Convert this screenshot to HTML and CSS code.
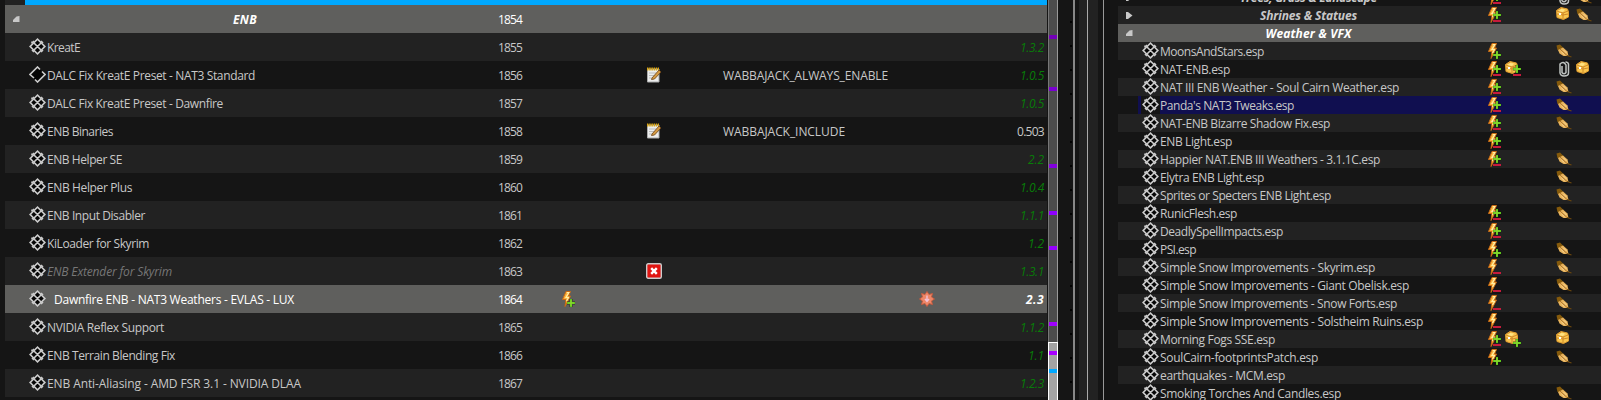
FILE: index.html
```html
<!DOCTYPE html>
<html lang="en">
<head>
<meta charset="utf-8">
<title>Mod list</title>
<link rel="stylesheet" href="styles.css">
</head>
<body>
<svg class="defs" aria-hidden="true">
  <symbol id="check" viewBox="0 0 17 17"><rect x="3.3" y="3.3" width="10.4" height="10.4" transform="rotate(45 8.5 8.5)" fill="#050505" stroke="#ccc" stroke-width="1.6"/><path d="M5 5l7 7M12 5l-7 7M3 5.500V3.500M5 3l-2 2M12 3l2 2M3 12l2 2M14 12l-2 2" stroke="#ccc" stroke-width="1.6" fill="none"/></symbol>
  <symbol id="uncheck" viewBox="0 0 17 17"><rect x="3" y="3" width="11" height="11" transform="rotate(45 8.5 8.5)" fill="#050505"/><path d="M5 12L1 8.500L8.500 1L11 3.500M13 5.500L16 8.500L8.500 16L6 13.500" stroke="#ccc" stroke-width="1.6" fill="none"/></symbol>
  <symbol id="bolt" viewBox="0 0 16 16"><path d="M5 .5h4.500L7.500 5H9.500L4 15.500L5 8.500H1.500z" fill="#fbb33c" stroke="#c96a14" stroke-width="1"/><path d="M5.800 1.500h2L5 6.500H7.500L5.500 10" stroke="#fff0a8" stroke-width="1.200" fill="none"/></symbol>
  <symbol id="plus" viewBox="0 0 10 10"><path d="M5 1v8M1 5h8" stroke="#102000" stroke-width="4" opacity=".35"/><path d="M5 1v8M1 5h8" stroke="#5cc41a" stroke-width="2"/><path d="M5 2v6M2 5h6" stroke="#a0e03a" stroke-width=".8"/></symbol>
  <symbol id="chest" viewBox="0 0 13 13"><path d="M.5 3.500L5 .5L11.500 2L12.500 5V10L7.500 12.500L1 10.500z" fill="#f9c64e" stroke="#e09c30"/><path d="M1 4L7 6L12 4M7 6V12M1 7L7 8L12 7M5 1L3 4" stroke="#c77a20" fill="none" stroke-width=".8"/><path d="M2 4L5 2L9 2.500L7 5z" fill="#ffe484"/><rect x="3" y="6" width="2" height="2" fill="#fff"/></symbol>
  <symbol id="feather" viewBox="0 0 16 14"><path d="M.5 1.500L4 .5L7.500 4L6 7L1.500 6z" fill="#855a0c"/><path d="M2 6L7 3.500L11.500 7.500L12.500 12L7.500 12L3.500 9.500z" fill="#e8b35c"/><path d="M4 5L11 11.500" stroke="#9b6420" stroke-width=".8"/><path d="M5.500 8L8.500 10.800M7.500 6L10.500 9" stroke="#ffe0a0" stroke-width=".8"/><path d="M11 11.500L15.500 13" stroke="#6c470d" stroke-width="1.200"/></symbol>
  <symbol id="clip" viewBox="0 0 12 16"><path d="M4 5V11.500Q6 14 8 11.500V4Q5.500-.5 2 3V12Q2.500 15 6 15Q10.500 15 10.500 12V3Q10 1 7.500 1" fill="none" stroke="#bfc3c1" stroke-width="1.500"/></symbol>
  <symbol id="note" viewBox="0 0 16 16"><path d="M1.500 2h11.500v13H1.500z" fill="#eceded" stroke="#aaa"/><path d="M1 2h12" stroke="#d9a512" stroke-width="3" stroke-dasharray="1.500 .7"/><path d="M3 6h7M3 8.500h6M3 11h4" stroke="#bbb"/><path d="M6 11L13 3L15 5L8.500 12L5.500 12.500z" fill="#d59a42" stroke="#694116" stroke-width=".8"/></symbol>
  <symbol id="cross" viewBox="0 0 16 16"><rect x=".7" y=".7" width="14.600" height="14.600" rx="1.500" fill="#e01512" stroke="#ccc" stroke-width="1.400"/><path d="M5.200 5.200l5.600 5.600M10.800 5.200l-5.600 5.600" stroke="#fff" stroke-width="2.400"/></symbol>
  <symbol id="burst" viewBox="0 0 16 16"><path d="M8 .5L10 3.500L13.500 2.500L12.500 6L15.500 8L12.500 10L13.500 13.500L10 12.500L8 15.500L6 12.500L2.500 13.500L3.500 10L.5 8L3.500 6L2.500 2.500L6 3.500z" fill="#ec8768" stroke="#c8583b" stroke-width=".9"/><path d="M8 4.500v6M6 8L8 10.500l2-2.500" stroke="#f1c1d8" stroke-width="1.400" fill="none"/></symbol>
  <symbol id="open" viewBox="0 0 7 7"><path d="M6.500 0V6H0V4L3.500.5z" fill="#c8c8c8"/></symbol>
  <symbol id="closed" viewBox="0 0 7 7"><path d="M0 0H2L6.500 3.500L2 7H0z" fill="#c8c8c8"/></symbol>
</svg>
<main class="window">
  <section class="mods"><div class="progress"></div><div id="mods"></div></section>
  <aside class="scrollbar" id="marks"><i class="thumb"></i></aside>
  <div class="gutter"><i class="dots"></i><i class="line line-a"></i><i class="strip"></i><i class="line"></i><i class="strip strip-b"></i><i class="gap"></i><i class="line line-c"></i></div>
  <section class="plugins" id="plugins"></section>
</main>
<script src="app.js"></script>
</body>
</html>
```
FILE: styles.css
```css
* { box-sizing: border-box; }
body { margin: 0; background: #151515; font: 12px/18px "Open Sans", "Noto Sans", sans-serif; color: #c8c8c8; overflow: hidden; }
.defs { position: absolute; width: 0; height: 0; }
svg { display: block; flex: none; }
.window { display: flex; height: 400px; width: 1601px; overflow: hidden; }
.mods { width: 1042px; margin-left: 5px; flex: none; }
.progress { height: 5px; background: #00a8ff; border-left: 20px solid #222; }
.mod { display: grid; grid-template-columns: 20px 473px 63px 85px 77px 196px 45px 83px; height: 28px; align-items: center; background: #151515; white-space: nowrap; }
.mod.alt, .plugin.alt { background: #222; }
.mod.sel, .plugin.sel { background: #5f5f5d; color: #fff; }
.name { display: flex; align-items: center; }
.name svg { margin: -2px 1px 0 4px; }
.text { padding-top: 2px; }
.separator .name { padding-left: 208px; }
.title { font-weight: 700; font-style: italic; }
.indent { padding-left: 7px; }
.disabled { font-style: italic; color: #777; }
.version { text-align: right; padding-right: 3px; }
.version.ok { color: #087c08; font-style: italic; }
.sel .version { font-weight: 700; font-style: italic; }
.arrow { margin-left: 8px; }
.scrollbar { position: relative; width: 8px; margin-left: 2px; background: #4c4c4c; flex: none; box-shadow: -1px 0 #777, 1px 0 #999; }
.mark { position: absolute; left: 0; width: 8px; height: 4px; }
.thumb { position: absolute; left: -1px; top: 342px; width: 10px; height: 60px; background: #a3a3a3; border: 1px solid #fff; }
.gutter { display: flex; width: 61px; flex: none; }
.gutter i { flex: none; }
.dots { width: 16px; background: radial-gradient(circle at 14px 22px, #000 1px, transparent 1.500px) 0 0 / 16px 24px; }
.line { width: 1px; background: #aaa; }
.line-a { width: 2px; background: #888; }
.strip { width: 12px; border-left: 4px solid #151515; background: #222; }
.strip-b { width: 10px; border: 0; }
.gap { width: 5px; }
.line-c { background: #999; }
.plugins { width: 483px; flex: none; margin-top: -12px; }
.plugin { display: grid; grid-template-columns: 23px 346px 18px 51px 20px 25px; height: 18px; align-items: center; background: #151515; white-space: nowrap; }
.plugin .name { height: 18px; }
.plugin .name svg { margin: -1px 1px 0 1px; }
.plugin .title { flex: 1; text-align: center; padding-right: 11px; }
.plugin.hover { background: linear-gradient(90deg, #151515 20px, #100f50 20px, #100f50 23px, #151515 23px, #151515 42px, #100f50 42px); }
.flag-chest { align-self: start; margin-top: 1px; }
.flag-clip { margin-left: 2px; }
.sign { position: relative; width: 16px; height: 16px; }
.sign .plus { position: absolute; left: 5px; top: 7px; }
.sign.both .plus { top: 3px; }
.sign .minus { position: absolute; left: 6px; top: 13px; width: 8px; height: 2px; background: #c61b3c; }
.sign.chested .plus { left: 7px; top: 7px; }
.sign.chested.both .plus { top: 3px; }
.sign.chested .minus { left: 8px; }
```
FILE: app.js
```js
const icon = (id, w, h, cls = "") => `<svg class="${cls}" width="${w}" height="${h}"><use href="#${id}"/></svg>`;

const mods = [
  ["KreatE", "1.3.2", 33], ["DALC Fix KreatE Preset - NAT3 Standard", "1.0.5", 208, { note: 1, tag: "WABBAJACK_ALWAYS_ENABLE", off: 1, tw: 165 }],
  ["DALC Fix KreatE Preset - Dawnfire", "1.0.5", 176], ["ENB Binaries", "0.503", 66, { note: 1, tag: "WABBAJACK_INCLUDE", tw: 122 }],
  ["ENB Helper SE", "2.2", 75], ["ENB Helper Plus", "1.0.4", 85], ["ENB Input Disabler", "1.1.1", 98],
  ["KiLoader for Skyrim", "1.2", 102], ["ENB Extender for Skyrim", "1.3.1", 125, { cross: 1 }],
  ["Dawnfire ENB - NAT3 Weathers - EVLAS - LUX", "2.3", 240, { sel: 1 }],
  ["NVIDIA Reflex Support", "1.1.2", 117], ["ENB Terrain Blending Fix", "1.1", 128],
  ["ENB Anti-Aliasing - AMD FSR 3.1 - NVIDIA DLAA", "1.2.3", 254]
];
const versionWidth = v => v === "0.503" ? 27 : v.length === 5 ? 24 : v === "2.3" ? 18 : 16;

document.getElementById("mods").innerHTML =
  `<div class="mod separator sel">${icon("open", 7, 7, "arrow")}<div class="name"><span class="title text"><span data-w="24">ENB</span></span></div><span class="text"><span data-w="24">1854</span></span></div>` +
  mods.map(([name, version, w, o = {}], i) =>
    `<div class="mod ${o.sel ? "sel" : i % 2 ? "" : "alt"}"><span></span>
    <div class="name">${icon(o.off ? "uncheck" : "check", 17, 17)}<span class="text ${o.cross ? "disabled" : ""} ${o.sel ? "indent" : ""}"><span data-w="${w}">${name}</span></span></div>
    <span class="text"><span data-w="24">${1855 + i}</span></span>
    <div class="sign">${o.sel ? icon("bolt", 16, 16) + icon("plus", 10, 10, "plus") : ""}</div>
    <div>${o.note ? icon("note", 16, 16) : o.cross ? icon("cross", 16, 16) : ""}</div>
    <span class="text">${o.tag ? `<span data-w="${o.tw}">${o.tag}</span>` : ""}</span>
    <div>${o.sel ? icon("burst", 16, 16) : ""}</div>
    <span class="text version ${o.sel || version === "0.503" ? "" : "ok"}"><span data-w="${versionWidth(version)}">${version}</span></span></div>`).join("");

document.getElementById("marks").innerHTML +=
  [[35, "#7400b8"], [87, "#7b00d2"], [164, "#8200df"], [211, "#8e00ff"], [246, "#9600ff"], [322, "#a000ff"], [351, "#a800ff"], [369, "#00a8ff"]]
    .map(([y, c]) => `<i class="mark" style="top:${y}px;background:${c}"></i>`).join("");

const plugins = [
  ["MoonsAndStars", 104, "+", "", "f"], ["NAT-ENB", 70, "+-", "+-", "pc"], ["NAT III ENB Weather - Soul Cairn Weather", 239, "+-", "", "f"],
  ["Panda's NAT3 Tweaks", 134, "+-", "", "f"], ["NAT-ENB Bizarre Shadow Fix", 170, "+-", "", "f"], ["ENB Light", 72, "+-", "", ""],
  ["Happier NAT.ENB III Weathers - 3.1.1C", 220, "+-", "", "f"], ["Elytra ENB Light", 104, "", "", "f"], ["Sprites or Specters ENB Light", 171, "", "", "f"],
  ["RunicFlesh", 77, "+-", "", "f"], ["DeadlySpellImpacts", 123, "+-", "", ""], ["PSI", 36, "+", "", "f"],
  ["Simple Snow Improvements - Skyrim", 215, "-", "", "f"], ["Simple Snow Improvements - Giant Obelisk", 249, "-", "", "f"],
  ["Simple Snow Improvements - Snow Forts", 237, "-", "", "f"], ["Simple Snow Improvements - Solstheim Ruins", 263, "-", "", "f"],
  ["Morning Fogs SSE", 115, "+-", "+", "c"], ["SoulCairn-footprintsPatch", 158, "+", "", "f"],
  ["earthquakes - MCM", 125, "", "", ""], ["Smoking Torches And Candles", 181, "", "", "f"]
];
const shapes = { f: () => icon("feather", 16, 14), p: () => icon("clip", 12, 16, "flag-clip"), c: () => icon("chest", 13, 13, "flag-chest") };
const sign = (base, s) => s ? `<div class="sign ${s === "+-" ? "both" : ""} ${base === "chest" ? "chested" : ""}">${base === "bolt" ? icon("bolt", 16, 16) : icon("chest", 13, 13)}${s.includes("-") ? '<i class="minus"></i>' : ""}${s.includes("+") ? icon("plus", 10, 10, "plus") : ""}</div>` : "<div></div>";
const group = (title, w, cls, arrow, flags) => `<div class="plugin ${cls}">${icon(arrow, 7, 7, "arrow")}<div class="name"><span class="title text"><span data-w="${w}">${title}</span></span></div>${flags}</div>`;
document.getElementById("plugins").innerHTML =
  group("Trees, Grass &amp; Landscape", 137, "", "closed", sign("bolt", "+-") + "<div></div>" + shapes.p() + shapes.f()) +
  group("Shrines &amp; Statues", 97, "alt", "closed", sign("bolt", "+-") + "<div></div>" + shapes.c() + shapes.f()) +
  group("Weather &amp; VFX", 86, "sel", "open", "") +
  plugins.map(([n, w, a, b, f], i) => `<div class="plugin ${n.startsWith("Panda") ? "hover" : i % 2 ? "" : "alt"}"><span></span><div class="name">${icon("check", 17, 17)}<span class="text"><span data-w="${w}">${n}.esp</span></span></div>${sign("bolt", a)}${sign("chest", b)}${[...f].map(k => shapes[k]()).join("")}</div>`).join("");

document.querySelectorAll("[data-w]").forEach(el => {
  const natural = el.getBoundingClientRect().width;
  el.style.letterSpacing = (el.dataset.w - natural) / el.textContent.length + "px";
});
```
